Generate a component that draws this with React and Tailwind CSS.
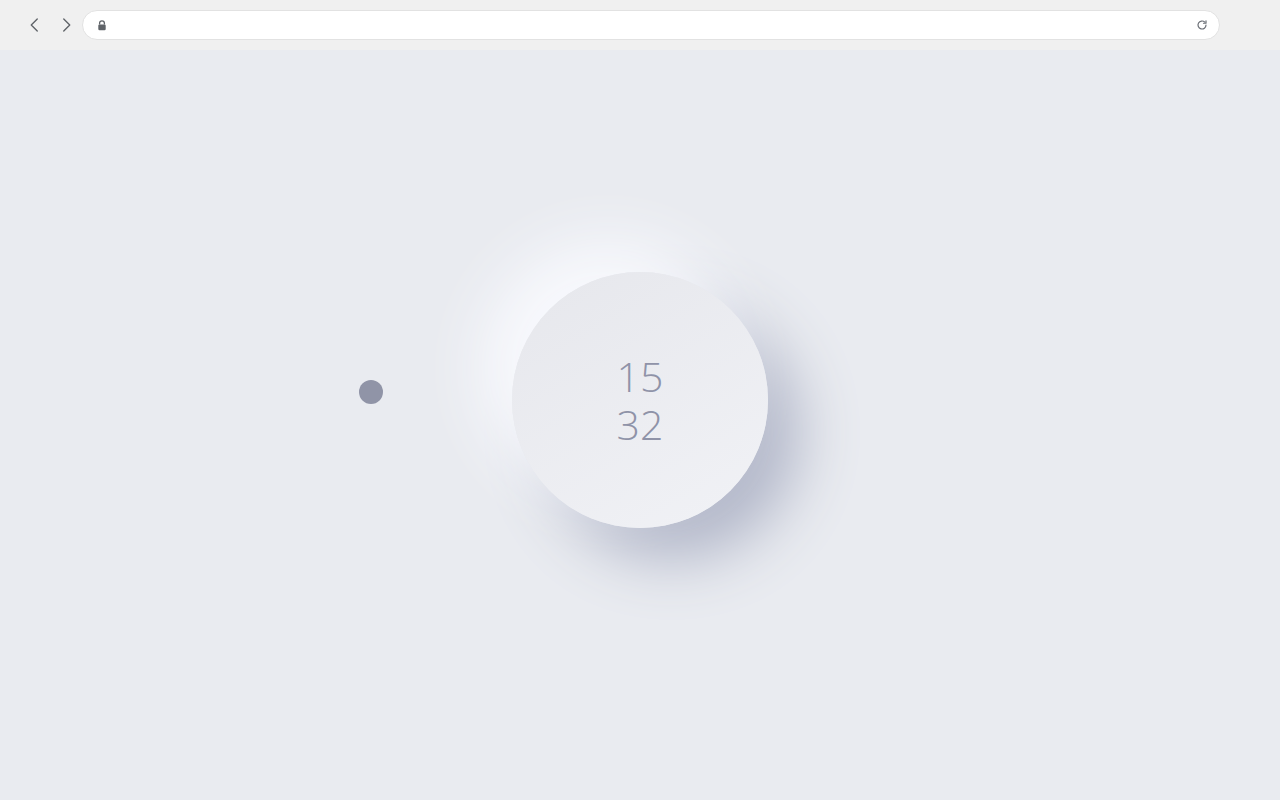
import React from 'react';

function ChromeBar() {
  return (
    <div className="h-[50px] bg-[#f0f0f0] flex items-center pl-[26px] pr-[60px]">
      <div className="flex items-center gap-[13px] text-[#5f6368]">
        <svg width="18" height="18" viewBox="0 0 24 24" fill="none" stroke="currentColor" strokeWidth="1.8" strokeLinecap="round" strokeLinejoin="round">
          <path d="M15 4l-8 8 8 8" />
        </svg>
        <svg width="18" height="18" viewBox="0 0 24 24" fill="none" stroke="currentColor" strokeWidth="1.8" strokeLinecap="round" strokeLinejoin="round">
          <path d="M9 4l8 8-8 8" />
        </svg>
      </div>
      <div className="ml-[7px] flex-1 h-[30px] bg-white rounded-full border border-[#e2e2e2] flex items-center pl-[14px] pr-[11px]">
        <svg width="10" height="11" viewBox="0 0 10 11" className="text-[#5f6368]">
          <path d="M2.6 4.6V3.3a2.4 2.4 0 0 1 4.8 0v1.3" fill="none" stroke="currentColor" strokeWidth="1.3" />
          <rect x="1.3" y="4.5" width="7.4" height="5.8" rx="1.2" fill="currentColor" />
        </svg>
        <div className="flex-1" />
        <svg width="12" height="12" viewBox="0 0 24 24" fill="none" stroke="#6b6f76" strokeWidth="2.4" strokeLinecap="round">
          <path d="M20 12a8 8 0 1 1-2.4-5.7" />
          <path d="M20 3.5v5h-5" strokeLinejoin="round" />
        </svg>
      </div>
    </div>
  );
}

export default function App() {
  return (
    <div className="w-[1280px] h-[800px] bg-[#e9ebf0] flex flex-col overflow-hidden" style={{ fontFamily: '"Open Sans", sans-serif' }}>
      <ChromeBar />
      <main className="flex-1 flex justify-center pt-[222px]">
        <div className="relative w-[256px] h-[256px]">
          <div className="absolute left-[-153px] top-[108px] w-[24px] h-[24px] rounded-full bg-[#9094a7]" />
          <div className="w-[256px] h-[256px] rounded-full bg-[linear-gradient(150deg,#e6e7ec,#f1f2f6)] shadow-[-32px_-32px_60px_#f8f9fd,32px_32px_60px_#b2b7c9] flex flex-col items-center justify-center text-[#8f93a8] text-[41px] font-light leading-[48px] pb-[0px]">
            <div>15</div>
            <div>32</div>
          </div>
        </div>
      </main>
    </div>
  );
}
